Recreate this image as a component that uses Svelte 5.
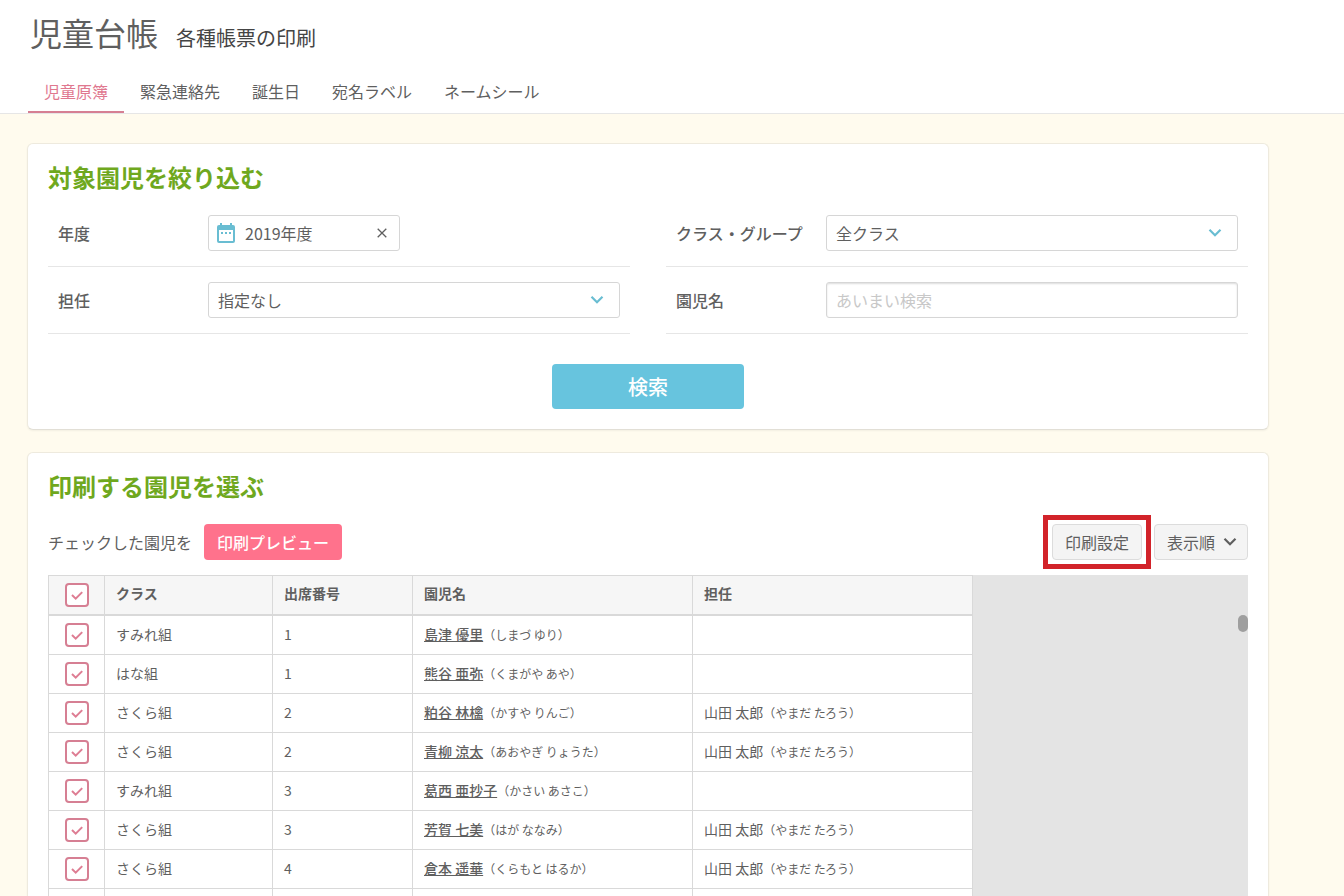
<script>
  const tabs = ['児童原簿', '緊急連絡先', '誕生日', '宛名ラベル', 'ネームシール'];
  const teacher = { name: '山田 太郎', kana: '（やまだ たろう）' };
  const children = $state([
    { group: 'すみれ組', number: '1', name: '島津 優里', kana: '（しまづ ゆり）', checked: true },
    { group: 'はな組', number: '1', name: '熊谷 亜弥', kana: '（くまがや あや）', checked: true },
    { group: 'さくら組', number: '2', name: '粕谷 林檎', kana: '（かすや りんご）', teacher, checked: true },
    { group: 'さくら組', number: '2', name: '青柳 涼太', kana: '（あおやぎ りょうた）', teacher, checked: true },
    { group: 'すみれ組', number: '3', name: '葛西 亜抄子', kana: '（かさい あさこ）', checked: true },
    { group: 'さくら組', number: '3', name: '芳賀 七美', kana: '（はが ななみ）', teacher, checked: true },
    { group: 'さくら組', number: '4', name: '倉本 遥華', kana: '（くらもと はるか）', teacher, checked: true }
  ]);
  let year = $state('2019年度');
  let active = $state(0);
  let allChecked = $derived(children.every((c) => c.checked));

  function toggleAll(event) {
    for (const child of children) child.checked = event.currentTarget.checked;
  }
</script>

{#snippet chevron()}
  <svg class="chevron" viewBox="0 0 14 10" width="14" height="10" aria-hidden="true">
    <path d="M1.500 1.800 7 7.200l5.500-5.400" fill="none" stroke="currentColor" stroke-width="2.200" />
  </svg>
{/snippet}

{#snippet tick()}
  <svg viewBox="0 0 24 24" width="24" height="24" aria-hidden="true">
    <path d="M7 12l3.700 3.600 6.500-6.500" fill="none" stroke="currentColor" stroke-width="2" />
  </svg>
{/snippet}

<div class="page">
  <header>
    <div class="heading">
      <h1>児童台帳</h1>
      <p>各種帳票の印刷</p>
    </div>
    <nav>
      {#each tabs as tab, i}
        <a href="#tab{i}" class:active={active === i} onclick={() => (active = i)}>{tab}</a>
      {/each}
    </nav>
  </header>

  <main>
    <section class="card">
      <h2>対象園児を絞り込む</h2>
      <form onsubmit={(e) => e.preventDefault()}>
        <div class="filters">
          <div class="field">
            <label for="year">年度</label>
            <div class="control date">
              <svg class="calendar" viewBox="0 0 18 20" width="18" height="20" aria-hidden="true">
                <path fill="currentColor" fill-rule="evenodd" d="M3 0h2v2h8V0h2v2h1a2 2 0 0 1 2 2v14a2 2 0 0 1-2 2H2a2 2 0 0 1-2-2V4a2 2 0 0 1 2-2h1zM2 7v11h14V7zM4 9h2v2H4zM8 9h2v2H8zM12 9h2v2h-2z" />
              </svg>
              <input id="year" type="text" bind:value={year} />
              <button type="button" class="clear" aria-label="クリア" onclick={() => (year = '')}>
                <svg viewBox="0 0 10 10" width="10" height="10" aria-hidden="true">
                  <path d="M.7.7l8.600 8.600M9.300.7L.7 9.300" fill="none" stroke="currentColor" stroke-width="1.300" />
                </svg>
              </button>
            </div>
          </div>
          <div class="field">
            <label for="group">クラス・グループ</label>
            <div class="control">
              <select id="group"><option>全クラス</option></select>
              {@render chevron()}
            </div>
          </div>
          <div class="field">
            <label for="teacher">担任</label>
            <div class="control">
              <select id="teacher"><option>指定なし</option></select>
              {@render chevron()}
            </div>
          </div>
          <div class="field">
            <label for="child">園児名</label>
            <div class="control inset">
              <input id="child" type="text" placeholder="あいまい検索" />
            </div>
          </div>
        </div>
        <button class="search" type="submit">検索</button>
      </form>
    </section>

    <section class="card list">
      <h2>印刷する園児を選ぶ</h2>
      <div class="toolbar">
        <span>チェックした園児を</span>
        <button class="preview" type="button">印刷プレビュー</button>
        <div class="actions">
          <div class="highlighted">
            <button type="button">印刷設定</button>
          </div>
          <button type="button">表示順 {@render chevron()}</button>
        </div>
      </div>
      <div class="grid">
        <table>
          <colgroup>
            <col class="c-check" /><col class="c-group" /><col class="c-number" /><col class="c-name" /><col class="c-name" />
          </colgroup>
          <thead>
            <tr>
              <th>
                <label class="check">
                  <input type="checkbox" aria-label="すべて選択" checked={allChecked} onchange={toggleAll} />
                  {@render tick()}
                </label>
              </th>
              <th>クラス</th>
              <th>出席番号</th>
              <th>園児名</th>
              <th>担任</th>
            </tr>
          </thead>
          <tbody>
            {#each children as child}
              <tr>
                <td>
                  <label class="check">
                    <input type="checkbox" aria-label={child.name} bind:checked={child.checked} />
                    {@render tick()}
                  </label>
                </td>
                <td>{child.group}</td>
                <td>{child.number}</td>
                <td><a href="#child">{child.name}</a><small>{child.kana}</small></td>
                <td>{#if child.teacher}{child.teacher.name}<small>{child.teacher.kana}</small>{/if}</td>
              </tr>
            {/each}
            <tr><td></td><td></td><td></td><td></td><td></td></tr>
          </tbody>
        </table>
        <div class="rest"><div class="thumb"></div></div>
      </div>
    </section>
  </main>
</div>

<style>
  :global(body) {
    margin: 0;
    background: #fffbee;
  }
  .page,
  .page * {
    box-sizing: border-box;
  }
  .page {
    display: flex;
    flex-direction: column;
    height: 100vh;
    overflow: hidden;
    color: #5f5f5f;
    font: 16px/24px 'Noto Sans CJK JP', sans-serif;
  }
  input,
  select,
  button {
    font: inherit;
    color: inherit;
  }
  button {
    cursor: pointer;
  }
  h1,
  h2,
  p {
    margin: 0;
  }

  header {
    flex: none;
    padding: 8px 28px 0;
    background: #fff;
    border-bottom: 1px solid #e6e6e6;
  }
  .heading {
    display: flex;
    align-items: baseline;
    gap: 18px;
    padding-left: 2px;
  }
  h1 {
    font-size: 32px;
    line-height: 48px;
    font-weight: 400;
  }
  .heading p {
    color: #444;
    font-size: 20px;
  }
  nav {
    display: flex;
    margin-top: 14px;
  }
  nav a {
    height: 43px;
    padding: 9px 16px 0;
    border-bottom: 2px solid transparent;
    color: inherit;
    text-decoration: none;
  }
  nav a.active {
    color: #e0788f;
    border-color: #d67f93;
  }

  main {
    flex: 1;
    min-height: 0;
    display: flex;
    flex-direction: column;
    gap: 22px;
    padding: 29px 75px 0 27px;
  }
  .card {
    flex: none;
    padding: 15px 20px 20px;
    background: #fff;
    border: 1px solid #eeeade;
    border-bottom-color: #e2dfd6;
    border-radius: 6px;
    box-shadow: 0 1px 2px rgba(0, 0, 0, 0.05);
  }
  h2 {
    color: #6fa81e;
    font-size: 24px;
    line-height: 36px;
    font-weight: 700;
  }

  .filters {
    display: grid;
    grid-template-columns: 1fr 1fr;
    column-gap: 36px;
    padding-top: 5px;
  }
  .field {
    display: flex;
    align-items: center;
    height: 67px;
    padding: 0 10px;
    border-bottom: 1px solid #e6e6e6;
  }
  .field label {
    width: 150px;
    font-weight: 500;
  }
  .control {
    position: relative;
    flex: 1;
    display: flex;
    align-items: center;
    height: 36px;
    border: 1px solid #d6d6d6;
    border-radius: 3px;
    background: #fff;
  }
  .control.date {
    flex: none;
    width: 192px;
    padding: 0 12px 0 8px;
  }
  .control.date input {
    padding: 0 10px;
  }
  .control.inset {
    box-shadow: inset 0 1px 2px rgba(0, 0, 0, 0.14);
  }
  .control input,
  .control select {
    appearance: none;
    flex: 1;
    min-width: 0;
    height: 34px;
    padding: 0 9px;
    border: 0;
    outline: 0;
    background: transparent;
  }
  .control input::placeholder {
    color: #c8c8c8;
    opacity: 1;
  }
  .control .chevron {
    position: absolute;
    right: 15px;
    color: #69bdd2;
    pointer-events: none;
  }
  .calendar {
    flex: none;
    color: #69bdd2;
  }
  .clear {
    display: flex;
    padding: 0;
    border: 0;
    background: none;
  }
  .search {
    display: block;
    width: 192px;
    height: 45px;
    margin: 30px auto 0;
    border: 0;
    border-radius: 4px;
    background: #67c4de;
    color: #fff;
    font-size: 20px;
    font-weight: 500;
  }

  .card.list {
    flex: 1;
    min-height: 0;
    display: flex;
    flex-direction: column;
    padding-bottom: 0;
    border-bottom: 0;
    border-radius: 6px 6px 0 0;
  }
  .toolbar {
    display: flex;
    align-items: center;
    gap: 12px;
    padding: 20px 0 15px;
  }
  .preview {
    height: 36px;
    padding: 0 13px;
    border: 0;
    border-radius: 4px;
    background: #ff728c;
    color: #fff;
    font-weight: 500;
  }
  .actions {
    display: flex;
    gap: 12px;
    margin-left: auto;
  }
  .actions button {
    display: flex;
    align-items: center;
    gap: 8px;
    height: 36px;
    padding: 0 12px;
    border: 1px solid #dcdcdc;
    border-radius: 4px;
    background: #f4f4f4;
  }
  .actions .chevron {
    margin-right: -2px;
  }
  .highlighted {
    position: relative;
  }
  .highlighted::after {
    content: '';
    position: absolute;
    inset: -9px;
    border: 5px solid #d2232a;
    pointer-events: none;
  }

  .grid {
    flex: 1;
    min-height: 0;
    display: flex;
    align-items: stretch;
    overflow: hidden;
  }
  table {
    flex: none;
    align-self: flex-start;
    table-layout: fixed;
    width: 925px;
    border-collapse: separate;
    border-spacing: 0;
    border-top: 1px solid #d9d9d9;
    border-left: 1px solid #d9d9d9;
    font-size: 14px;
    line-height: 20px;
  }
  .c-check {
    width: 56px;
  }
  .c-group {
    width: 168px;
  }
  .c-number {
    width: 140px;
  }
  .c-name {
    width: 280px;
  }
  th,
  td {
    height: 39px;
    padding: 0 11px 2px;
    border-right: 1px solid #d9d9d9;
    border-bottom: 1px solid #d9d9d9;
    text-align: left;
    white-space: nowrap;
  }
  th {
    height: 40px;
    padding-bottom: 4px;
    border-bottom-width: 2px;
    background: #f6f6f6;
    font-weight: 700;
  }
  th:first-child,
  td:first-child {
    padding: 0 16px;
  }
  td a {
    color: inherit;
    font-weight: 500;
    text-decoration: underline;
  }
  small {
    font-size: 12px;
  }
  .check {
    position: relative;
    display: block;
    width: 24px;
    height: 24px;
    color: #de7d93;
  }
  .check input {
    appearance: none;
    display: block;
    width: 24px;
    height: 24px;
    margin: 0;
    border: 2px solid #d67f93;
    border-radius: 4px;
    background: #fff;
  }
  .check svg {
    position: absolute;
    inset: 0;
    pointer-events: none;
  }
  .check input:not(:checked) + svg {
    display: none;
  }
  .rest {
    flex: 1;
    display: flex;
    justify-content: flex-end;
    padding-top: 40px;
    background: #e4e4e4;
  }
  .thumb {
    width: 10px;
    height: 17px;
    border-radius: 5px;
    background: #9f9f9f;
  }
</style>
